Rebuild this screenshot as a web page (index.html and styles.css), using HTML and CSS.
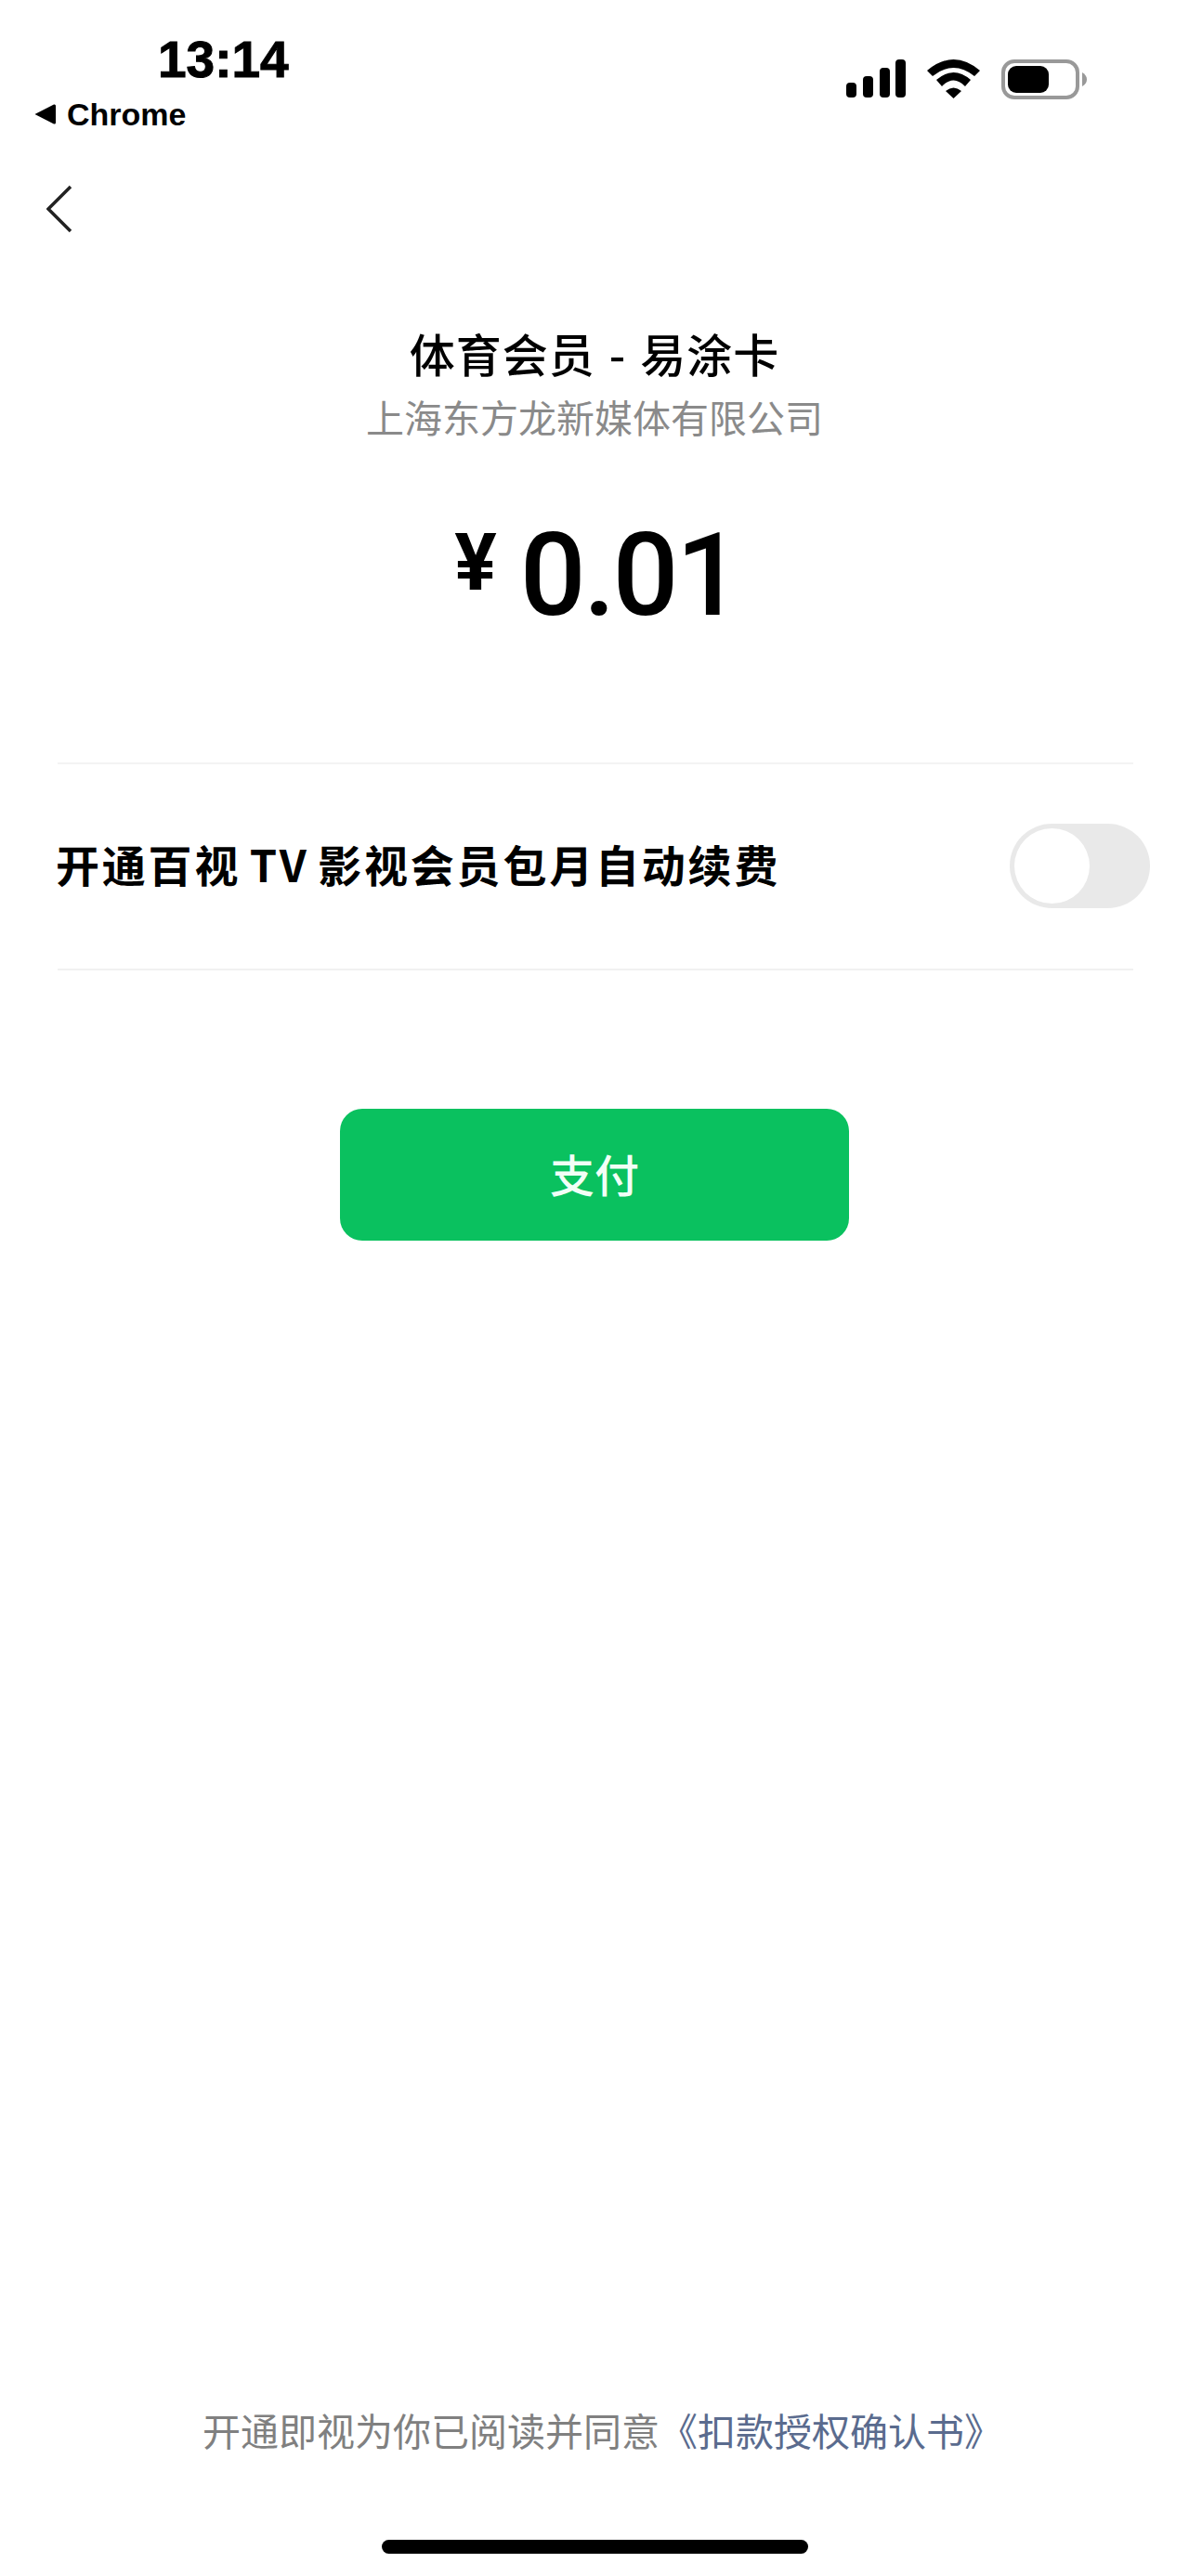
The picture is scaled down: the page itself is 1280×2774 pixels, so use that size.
FILE: index.html
```html
<!DOCTYPE html>
<html lang="zh-CN">
<head>
    <meta charset="UTF-8">
    <meta name="viewport" content="width=device-width, initial-scale=1.0">
    <title>支付</title>
    <link rel="stylesheet" href="styles.css">
</head>
<body>
    <div class="page">
        <div class="status-bar">
            <div class="status-left">
                <div class="time">13:14</div>
                <div class="back-app">
                    <svg class="back-app-arrow" width="23" height="22" viewBox="0 0 23 22"><path d="M0.5 11 L21 0.5 Q23 0 23 2 L23 20 Q23 22 21 21.5 Z" fill="#000"/></svg>
                    <span>Chrome</span>
                </div>
            </div>
            <div class="status-right">
                <svg width="64" height="41" viewBox="0 0 64 41" fill="#000">
                    <rect x="0" y="25" width="11" height="16" rx="4"/>
                    <rect x="18" y="18" width="11" height="23" rx="4"/>
                    <rect x="36" y="9" width="11" height="32" rx="4"/>
                    <rect x="53" y="0" width="11" height="41" rx="4"/>
                </svg>
                <svg width="57" height="42" viewBox="0 0 57 42" fill="#000">
                    <path d="M0 12 Q28.5 -12 57 12 L51 18 Q28.5 0 6 18 Z"/>
                    <path d="M10 22 Q28.5 6 47 22 L41 29 Q28.5 16 16 29 Z"/>
                    <path d="M20 34 Q28.5 27 37 34 L28.5 42 Z"/>
                </svg>
                <svg width="92" height="43" viewBox="0 0 92 43">
                    <rect x="2" y="2" width="80" height="39" rx="12" fill="none" stroke="#999" stroke-width="4"/>
                    <rect x="7" y="7" width="44" height="29" rx="9" fill="#000"/>
                    <path d="M87 14 Q92 17 92 21.5 Q92 26 87 29 Z" fill="#999"/>
                </svg>
            </div>
        </div>

        <div class="nav">
            <svg width="28" height="52" viewBox="0 0 28 52"><path d="M26 2 L2 26 L26 50" fill="none" stroke="#222" stroke-width="3.5"/></svg>
        </div>

        <div class="order">
            <div class="order-title">体育会员 - 易涂卡</div>
            <div class="order-company">上海东方龙新媒体有限公司</div>
            <div class="amount">
                <span class="amount-yen">¥</span>
                <span class="amount-value">0.01</span>
            </div>
        </div>

        <div class="renew-row">
            <span class="renew-label">开通百视 TV 影视会员包月自动续费</span>
            <div class="switch"><div class="switch-knob"></div></div>
        </div>

        <div class="pay-btn">支付</div>

        <div class="footer">
            <div class="agreement">开通即视为你已阅读并同意<span class="agreement-link">《扣款授权确认书》</span></div>
            <div class="home-bar"></div>
        </div>
    </div>
</body>
</html>
```

FILE: styles.css
```css
body {
    margin: 0;
    padding: 0;
    background: #fff;
    color: #000;
    font-family: "Liberation Sans", "Noto Sans CJK SC", sans-serif;
}
.page {
    display: flex;
    flex-direction: column;
    height: 2774px;
    overflow: hidden;
}
.status-bar {
    display: flex;
    justify-content: space-between;
    padding: 34px 110px 0 37px;
}
.time {
    margin-left: 133px;
    font-size: 55px;
    font-weight: 700;
    line-height: 60px;
    -webkit-text-stroke: 1px #000;
}
.back-app {
    display: flex;
    align-items: center;
    gap: 12px;
    margin-top: 9px;
    font-size: 34px;
    font-weight: 700;
    line-height: 40px;
}
.status-right {
    display: flex;
    align-items: flex-start;
    gap: 23px;
    margin-top: 30px;
}
.nav {
    padding: 56px 0 0 50px;
    height: 154px;
    box-sizing: border-box;
}
.nav svg {
    display: block;
}
.order {
    display: flex;
    flex-direction: column;
    align-items: center;
    margin-top: 53px;
}
.order-title {
    font-family: "Noto Sans CJK SC", sans-serif;
    font-size: 49px;
    font-weight: 500;
    line-height: 60px;
    letter-spacing: 1px;
    word-spacing: 3px;
}
.order-company {
    font-family: "Noto Sans CJK SC", sans-serif;
    font-size: 41px;
    line-height: 50px;
    margin-top: 13px;
    color: #8a8a8a;
}
.amount {
    display: flex;
    align-items: flex-start;
    height: 112px;
    margin: 91px 0 145px 5px;
    font-family: Roboto, sans-serif;
}
.amount-yen {
    font-size: 85px;
    font-weight: 700;
    line-height: 85px;
    margin-right: 25px;
}
.amount-value {
    font-size: 125px;
    font-weight: 500;
    line-height: 112px;
    letter-spacing: -3px;
}
.renew-row {
    display: flex;
    justify-content: space-between;
    align-items: center;
    height: 224px;
    box-sizing: border-box;
    margin: 0 60px 0 62px;
    border-top: 2px solid #f3f3f3;
    border-bottom: 2px solid #f1f1f1;
}
.renew-label {
    margin: 0 0 7px -2px;
    font-family: "Noto Sans CJK SC", sans-serif;
    font-size: 47px;
    font-weight: 700;
    letter-spacing: 2.8px;
    word-spacing: -4px;
}
.switch {
    width: 151px;
    height: 91px;
    margin: 0 -18px 2px 0;
    padding: 5px;
    box-sizing: border-box;
    border-radius: 46px;
    background: #e9e9e9;
}
.switch-knob {
    width: 81px;
    height: 81px;
    border-radius: 50%;
    background: #fff;
}
.pay-btn {
    align-self: center;
    width: 548px;
    height: 142px;
    margin-top: 149px;
    border-radius: 24px;
    background: #0ac15f;
    color: #f2fff7;
    font-family: "Noto Sans CJK SC", sans-serif;
    font-size: 48px;
    font-weight: 500;
    line-height: 138px;
    text-align: center;
}
.footer {
    display: flex;
    flex-direction: column;
    align-items: center;
    margin-top: auto;
    padding-bottom: 24px;
}
.agreement {
    padding-left: 17px;
    font-family: "Noto Sans CJK SC", sans-serif;
    font-size: 41px;
    line-height: 50px;
    color: #808080;
}
.agreement-link {
    color: #5a6b8e;
}
.home-bar {
    width: 459px;
    height: 15px;
    margin-top: 94px;
    border-radius: 8px;
    background: #000;
}
```
